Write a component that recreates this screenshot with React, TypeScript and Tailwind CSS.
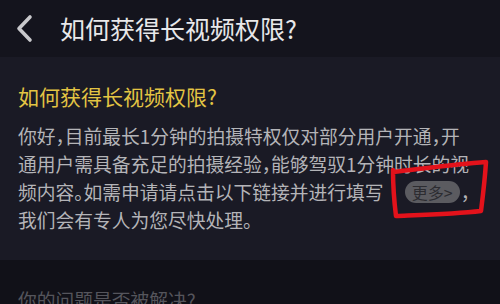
import React from 'react';

function BackIcon() {
  return (
    <svg width="20" height="30" viewBox="0 0 20 30" className="shrink-0">
      <path d="M14 3 L3 14.5 L14 26" fill="none" stroke="#c9c9cc" strokeWidth="3.6" strokeLinecap="round" strokeLinejoin="round" />
    </svg>
  );
}

// hand-drawn red marker box around the "更多>" link
function Annotation() {
  return (
    <svg className="absolute left-0 top-0 pointer-events-none" width="500" height="304" viewBox="0 0 500 304">
      <path
        d="M393 172 C 420 169 455 164 486 162 C 485 178 483 195 481 211 C 455 214 420 215 396 216 C 394 200 393 186 393 170"
        fill="none"
        stroke="#e3121b"
        strokeWidth="4.5"
        strokeLinecap="round"
        strokeLinejoin="round"
      />
    </svg>
  );
}

const lines = [
  '你好，目前最长1分钟的拍摄特权仅对部分用户开通，开',
  '通用户需具备充足的拍摄经验，能够驾驭1分钟时长的视',
];

export default function App() {
  return (
    <div className="relative w-[500px] h-[304px] overflow-hidden bg-[#111118] font-['Noto_Sans_CJK_SC','Noto_Sans',sans-serif]">
      <header className="h-[57px] flex items-center bg-[#14141d] pl-[16px]">
        <BackIcon />
        <h1 className="ml-[24px] text-[25px] leading-none text-[#e8e8ea]">如何获得长视频权限?</h1>
      </header>

      <section className="bg-[#1a1a25] px-[18px] pt-[25px] pb-[26px]">
        <h2 className="text-[21px] leading-[28px] text-[#e3c443]">如何获得长视频权限?</h2>
        <div className="mt-[12px] text-[18.75px] leading-[28px] text-[#b4b4b8] whitespace-nowrap [font-feature-settings:'halt']">
          {lines.map((l) => (
            <div key={l}>{l}</div>
          ))}
          <div className="flex items-center">
            <span>频内容。如需申请请点击以下链接并进行填写</span>
            <span className="ml-[21px] h-[22px] w-[55px] flex items-center justify-center rounded-full bg-[#5b5b60] text-[16px] leading-none text-[#2c2c31]">
              更多&gt;
            </span>
            <span className="ml-[1px]">，</span>
          </div>
          <div>我们会有专人为您尽快处理。</div>
        </div>
      </section>

      <div className="px-[18px] pt-[26px]">
        <p className="text-[18.75px] leading-[28px] text-[#55555c]">你的问题是否被解决?</p>
      </div>

      <Annotation />
    </div>
  );
}
